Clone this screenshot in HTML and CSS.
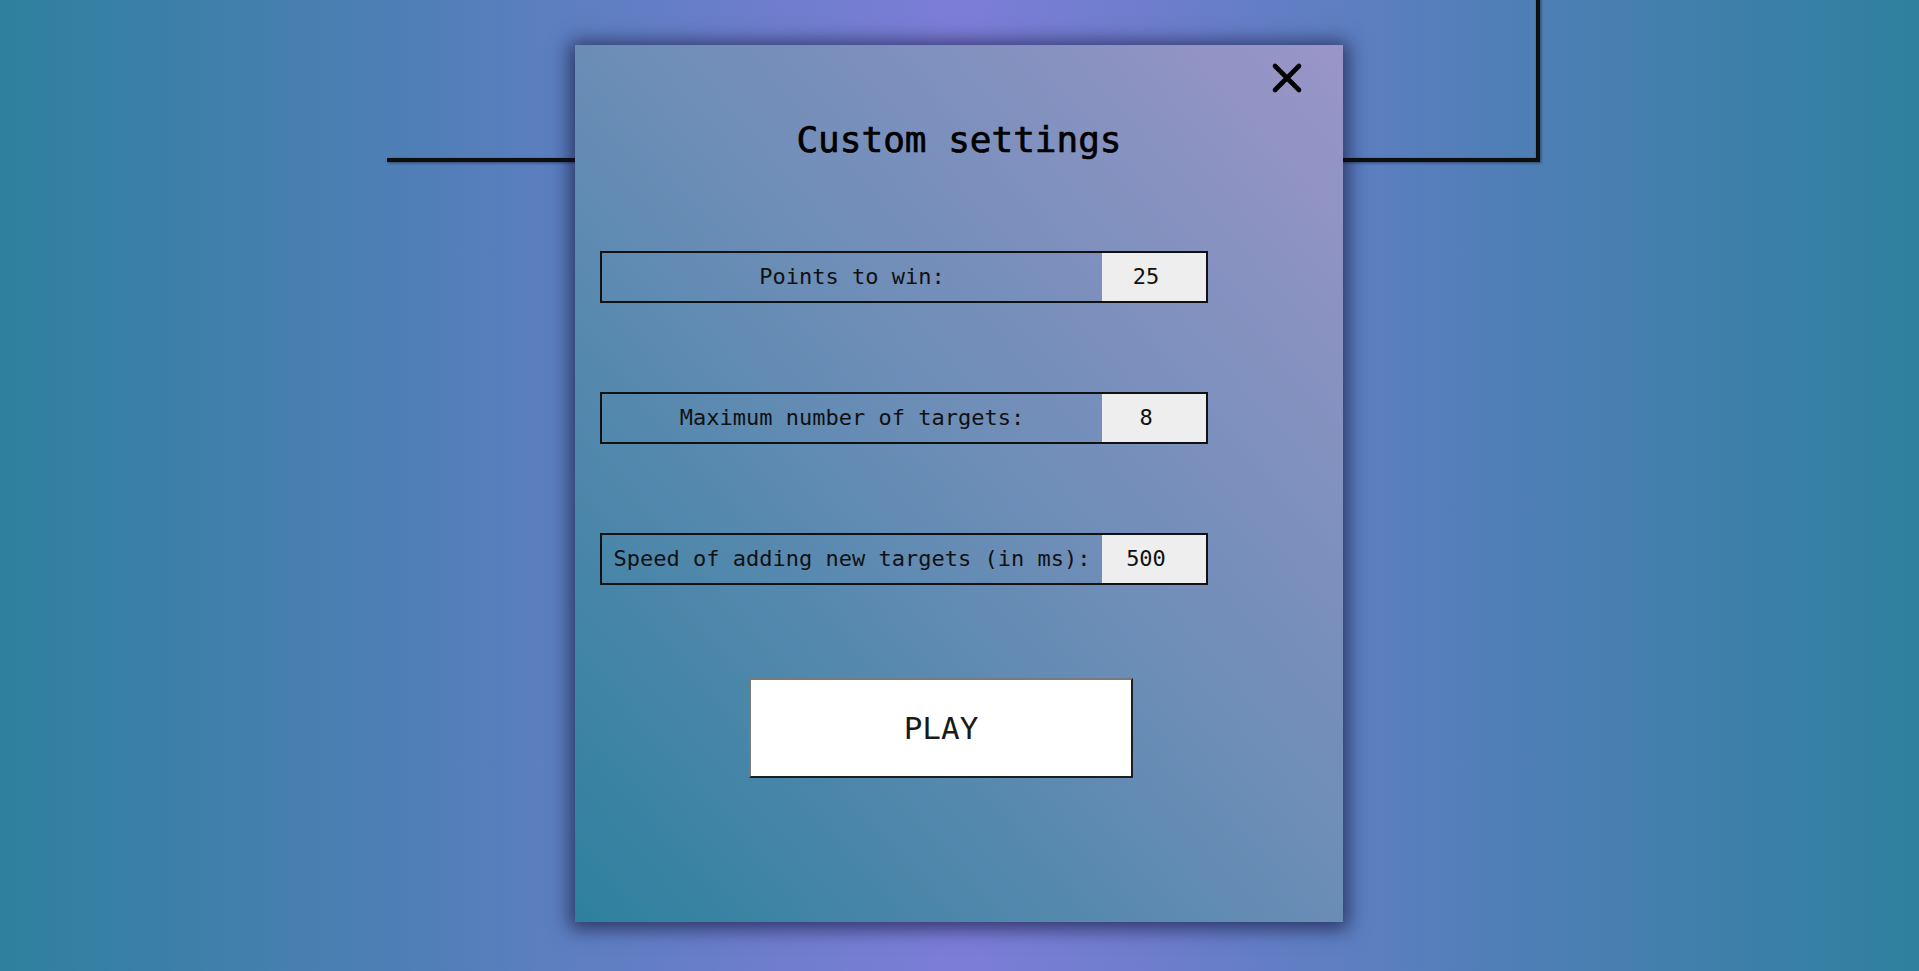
FILE: index.html
```html
<!DOCTYPE html>
<html lang="en">
<head>
<meta charset="utf-8">
<title>Custom settings</title>
<link rel="stylesheet" href="styles.css">
</head>
<body>
<div class="frame"></div>
<div class="modal">
  <button class="close" aria-label="Close">
    <svg width="32" height="32" viewBox="0 0 32 32"><path d="M4 4 L28 28 M28 4 L4 28" stroke="#000" stroke-width="4.6" stroke-linecap="round" fill="none"/></svg>
  </button>
  <h1 class="title">Custom settings</h1>
  <div class="row first">
    <span class="label">Points to win:</span>
    <span class="value">25</span>
  </div>
  <div class="row">
    <span class="label">Maximum number of targets:</span>
    <span class="value">8</span>
  </div>
  <div class="row">
    <span class="label">Speed of adding new targets (in ms):</span>
    <span class="value">500</span>
  </div>
  <button class="play">PLAY</button>
</div>
</body>
</html>
```
FILE: styles.css
```css
html, body {
  margin: 0;
  padding: 0;
}
body {
  position: relative;
  height: 971px;
  overflow: hidden;
  background: linear-gradient(to right, #2e809e 0%, #7d7dd8 50%, #2e809e 100%);
  font-family: "DejaVu Sans Mono", "Liberation Mono", monospace;
  color: #111;
}
.frame {
  position: absolute;
  left: 387px;
  top: -20px;
  width: 1149px;
  height: 178px;
  border-right: 4px solid #0e0e0e;
  border-bottom: 4px solid #0e0e0e;
  filter: drop-shadow(1px 1px 1.5px rgba(0, 0, 0, 0.45));
}
.modal {
  position: relative;
  box-sizing: border-box;
  width: 768px;
  height: 877px;
  margin: 45px 0 0 575px;
  padding-left: 25px;
  display: flex;
  flex-direction: column;
  align-items: flex-start;
  background: linear-gradient(to top right, #2e809e 0%, #6a8db6 50%, #9a95c8 100%);
  box-shadow: 0 2px 18px 5px rgba(10, 12, 45, 0.62);
}
.close {
  position: absolute;
  top: 17px;
  right: 40px;
  width: 32px;
  height: 32px;
  padding: 0;
  border: 0;
  background: none;
  cursor: pointer;
}
.close svg {
  display: block;
}
.title {
  align-self: stretch;
  margin: 75px 25px 0 0;
  font-size: 36px;
  line-height: 40px;
  font-weight: 400;
  text-align: center;
  color: #000;
  -webkit-text-stroke: 0.7px #000;
}
.row {
  box-sizing: border-box;
  display: flex;
  width: 608px;
  height: 52px;
  margin-top: 89px;
  border: 2px solid #111;
  font-size: 22px;
  line-height: 48px;
}
.row.first {
  margin-top: 91px;
}
.label {
  flex: 1;
  text-align: center;
  color: #111;
}
.value {
  box-sizing: border-box;
  width: 104px;
  padding-right: 16px;
  background: #eeeeee;
  text-align: center;
  color: #111;
}
.play {
  box-sizing: border-box;
  width: 384px;
  height: 100px;
  margin: 93px 0 0 149px;
  background: #ffffff;
  border-top: 2px solid #7a7a7a;
  border-left: 2px solid #7a7a7a;
  border-right: 2px solid #1e1e1e;
  border-bottom: 2px solid #1e1e1e;
  font-family: "DejaVu Sans Mono", "Liberation Mono", monospace;
  font-size: 31px;
  color: #1a1a1a;
  padding: 0;
  cursor: pointer;
}
```
